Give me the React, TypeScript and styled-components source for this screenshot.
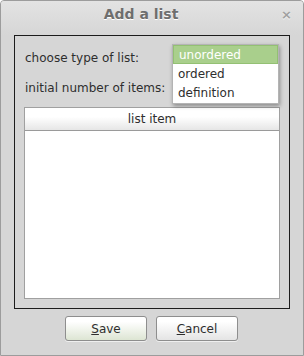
import React from 'react';
import styled, { createGlobalStyle } from 'styled-components';

const Global = createGlobalStyle`
  body {
    margin: 0;
    font-family: 'DejaVu Sans', sans-serif;
  }
`;

const Window = styled.div`
  width: 304px;
  height: 356px;
  box-sizing: border-box;
  border: 1px solid #9c9c9c;
  border-radius: 4px 4px 0 0;
  background: #d6d6d6;
  display: flex;
  flex-direction: column;
  position: relative;
  overflow: hidden;
`;

const TitleBar = styled.div`
  height: 34px;
  flex: none;
  display: flex;
  align-items: center;
  justify-content: center;
  position: relative;
  background: linear-gradient(#e3e3e3, #d6d6d6);
  padding: 0 22px 9px 0;
  box-sizing: border-box;
`;

const Title = styled.span`
  font-size: 14px;
  font-weight: bold;
  color: #6e6e6e;
  text-shadow: 0 1px 0 #ffffff;
`;

const Close = styled.span`
  position: absolute;
  right: 11px;
  top: 6px;
  font-size: 13px;
  font-weight: bold;
  color: #a0a0a0;
  text-shadow: 0 1px 0 #f4f4f4;
`;

const Frame = styled.div`
  margin: 0 13px;
  height: 274px;
  box-sizing: border-box;
  border: 1px solid #1c1c1c;
  padding: 10px 9px 9px 9px;
  display: flex;
  flex-direction: column;
  position: relative;
`;

const Row = styled.div<{ gap: number }>`
  height: 24px;
  display: flex;
  align-items: center;
  padding-left: 1px;
  margin-bottom: ${(p) => p.gap}px;
  font-size: 12px;
  color: #2e2e2e;
`;

const Table = styled.div`
  flex: 1;
  border: 1px solid #a0a0a0;
  background: #ffffff;
  display: flex;
  flex-direction: column;
`;

const HeaderCell = styled.div`
  height: 23px;
  box-sizing: border-box;
  border-bottom: 1px solid #9a9a9a;
  background: linear-gradient(#ffffff 40%, #e6e6e6);
  display: flex;
  align-items: center;
  justify-content: center;
  font-size: 12px;
  color: #2e2e2e;
`;

const Popup = styled.div`
  position: absolute;
  left: 157px;
  top: 8px;
  width: 107px;
  box-sizing: border-box;
  background: #ffffff;
  border: 1px solid #b4b4b4;
  box-shadow: 1px 2px 4px rgba(0, 0, 0, 0.35);
  padding: 0 0 1px;
`;

const Option = styled.div<{ selected?: boolean }>`
  height: 19px;
  box-sizing: border-box;
  display: flex;
  align-items: center;
  padding-left: 5px;
  font-size: 12px;
  color: ${(p) => (p.selected ? '#ffffff' : '#2e2e2e')};
  background: ${(p) => (p.selected ? '#a9cf8c' : 'transparent')};
  border: ${(p) => (p.selected ? '1px solid #93c073' : 'none')};
`;

const Buttons = styled.div`
  flex: 1;
  display: flex;
  justify-content: center;
  align-items: flex-start;
  gap: 9px;
  padding-top: 7px;
  padding-right: 1px;
`;

const Button = styled.button<{ primary?: boolean }>`
  width: 82px;
  height: 25px;
  border: 1px solid #8e8e8e;
  border-radius: 3px;
  background: ${(p) =>
    p.primary
      ? 'linear-gradient(#ffffff 20%, #dde5d3)'
      : 'linear-gradient(#ffffff 20%, #e4e4e4)'};
  font-family: 'DejaVu Sans', sans-serif;
  font-size: 12px;
  color: #2e2e2e;
  padding: 0;
  box-shadow: 0 1px 0 rgba(255, 255, 255, 0.6);
  u {
    text-decoration: underline;
  }
`;

const App = () => {
  return (
    <>
      <Global />
      <Window>
        <TitleBar>
          <Title>Add a list</Title>
          <Close>×</Close>
        </TitleBar>
        <Frame>
          <Row gap={6}>choose type of list:</Row>
          <Row gap={7}>initial number of items:</Row>
          <Table>
            <HeaderCell>list item</HeaderCell>
          </Table>
          <Popup>
            <Option selected>unordered</Option>
            <Option>ordered</Option>
            <Option>definition</Option>
          </Popup>
        </Frame>
        <Buttons>
          <Button primary>
            <u>S</u>ave
          </Button>
          <Button>
            <u>C</u>ancel
          </Button>
        </Buttons>
      </Window>
    </>
  );
};

export default App;
